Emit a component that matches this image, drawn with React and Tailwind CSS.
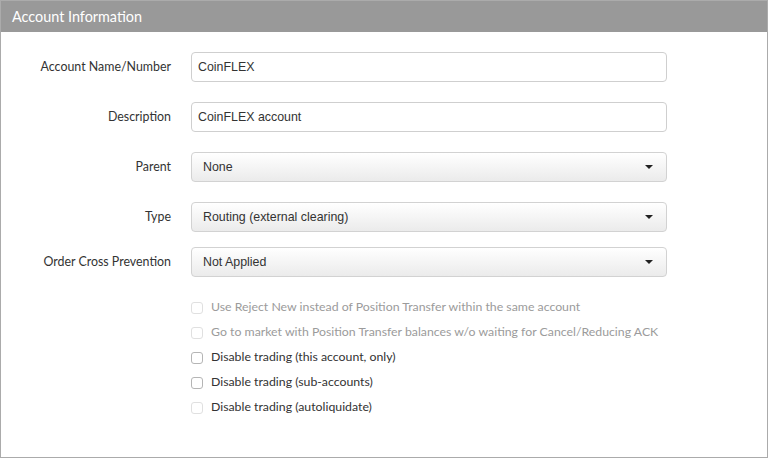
import React from "react";

const labelFont = { fontFamily: "Lato, 'Open Sans', sans-serif" };

const Row = ({ label, children, className = "" }) => (
  <div className={`flex items-center ${className}`}>
    <div className="w-[170px] text-right text-[12.4px] text-[#333]" style={labelFont}>
      {label}
    </div>
    <div className="ml-[20px] w-[476px]">{children}</div>
  </div>
);

const TextInput = ({ value }) => (
  <div className="flex h-[30px] items-center rounded-[4px] border border-[#cfcfcf] bg-white px-[6px] text-[12.4px] text-[#333] font-['Liberation_Sans',Arial,sans-serif]">
    {value}
  </div>
);

const Select = ({ value }) => (
  <div className="flex h-[30px] items-center justify-between rounded-[4px] border border-[#d2d2d2] bg-gradient-to-b from-white to-[#ebebeb] pl-[11px] pr-[13px] text-[12.4px] text-[#333] font-['Liberation_Sans',Arial,sans-serif]">
    <span>{value}</span>
    <svg width="8" height="4" viewBox="0 0 8 4">
      <path d="M0 0h8L4 4z" fill="#222" />
    </svg>
  </div>
);

const Check = ({ label, disabled, boxFaded }) => (
  <div className="flex h-[25px] items-center">
    <span
      className={`h-[12px] w-[12px] rounded-[3px] border bg-white ${
        boxFaded ? "border-[#e0e0e0]" : "border-[#b5b5b5]"
      }`}
    />
    <span
      className={`ml-[8px] text-[12.3px] ${disabled ? "text-[#9b9b9b]" : "text-[#333]"}`}
      style={labelFont}
    >
      {label}
    </span>
  </div>
);

export default function App() {
  return (
    <div className="h-[458px] w-[769px] bg-white">
      <div className="flex h-[458px] w-[768px] flex-col border border-[#ababab] bg-white">
        <div
          className="flex h-[31px] items-center bg-[#999] pl-[11px] text-[14.4px] text-white"
          style={labelFont}
        >
          Account Information
        </div>
        <div className="flex flex-col pt-[20px]">
          <Row label="Account Name/Number">
            <TextInput value="CoinFLEX" />
          </Row>
          <Row label="Description" className="mt-[20px]">
            <TextInput value="CoinFLEX account" />
          </Row>
          <Row label="Parent" className="mt-[20px]">
            <Select value="None" />
          </Row>
          <Row label="Type" className="mt-[20px]">
            <Select value="Routing (external clearing)" />
          </Row>
          <Row label="Order Cross Prevention" className="mt-[15px]">
            <Select value="Not Applied" />
          </Row>
          <div className="ml-[190px] mt-[18px] flex flex-col">
            <Check label="Use Reject New instead of Position Transfer within the same account" disabled boxFaded />
            <Check label="Go to market with Position Transfer balances w/o waiting for Cancel/Reducing ACK" disabled boxFaded />
            <Check label="Disable trading (this account, only)" />
            <Check label="Disable trading (sub-accounts)" />
            <Check label="Disable trading (autoliquidate)" boxFaded />
          </div>
        </div>
      </div>
    </div>
  );
}
